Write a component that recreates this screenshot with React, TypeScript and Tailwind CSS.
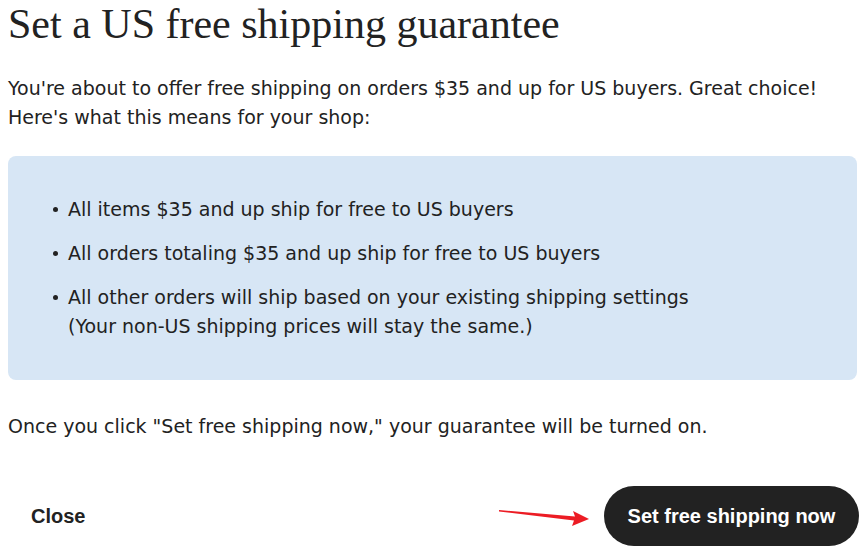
const bullets = [
  { text: "All items $35 and up ship for free to US buyers" },
  { text: "All orders totaling $35 and up ship for free to US buyers" },
  {
    text: "All other orders will ship based on your existing shipping settings",
    note: "(Your non-US shipping prices will stay the same.)",
  },
];

const App = () => {
  return (
    <div className="w-[863px] h-[555px] bg-white text-[#222222] overflow-hidden font-['DejaVu_Sans',sans-serif]">
      <div className="pl-2 pr-[6px] pt-px">
        <h1 className="font-['Liberation_Serif',serif] text-[42px] leading-[46px] text-[#222222]">
          Set a US free shipping guarantee
        </h1>

        <p className="mt-[27px] text-[19px] leading-[29px]">
          You're about to offer free shipping on orders $35 and up for US buyers. Great choice!
          <br />
          Here's what this means for your shop:
        </p>

        <div className="mt-[24px] h-[224px] rounded-lg bg-[#d7e6f5] pl-[45px] pt-[39px]">
          <ul className="flex flex-col gap-[15px] text-[19px] leading-[29px]">
            {bullets.map((b) => (
              <li key={b.text} className="flex">
                <span className="flex h-[29px] w-[15px] shrink-0 items-center">
                  <span className="h-[5px] w-[5px] rounded-full bg-[#222222]" />
                </span>
                <span>
                  {b.text}
                  {b.note && (
                    <>
                      <br />
                      {b.note}
                    </>
                  )}
                </span>
              </li>
            ))}
          </ul>
        </div>

        <p className="mt-[32px] text-[19px] leading-[29px]">
          Once you click "Set free shipping now," your guarantee will be turned on.
        </p>

        <div className="mt-[45px] flex items-center justify-between font-['Liberation_Sans',Arial,sans-serif]">
          <button className="ml-[14px] px-[9px] py-3 text-[20px] font-bold">Close</button>

          <div className="mr-[-2px] flex items-center">
            <svg width="93" height="22" viewBox="0 0 93 22" className="mr-[12px] mt-[2px]">
              <path d="M0 4 L76 10.5 L74 5 L90 13 L73 20 L75 14.5 L0 5.5 Z" fill="#ec1c24" />
            </svg>
            <button className="h-[60px] w-[255px] rounded-full bg-[#222222] text-[20px] font-bold text-white">
              Set free shipping now
            </button>
          </div>
        </div>
      </div>
    </div>
  );
};

export default App;
